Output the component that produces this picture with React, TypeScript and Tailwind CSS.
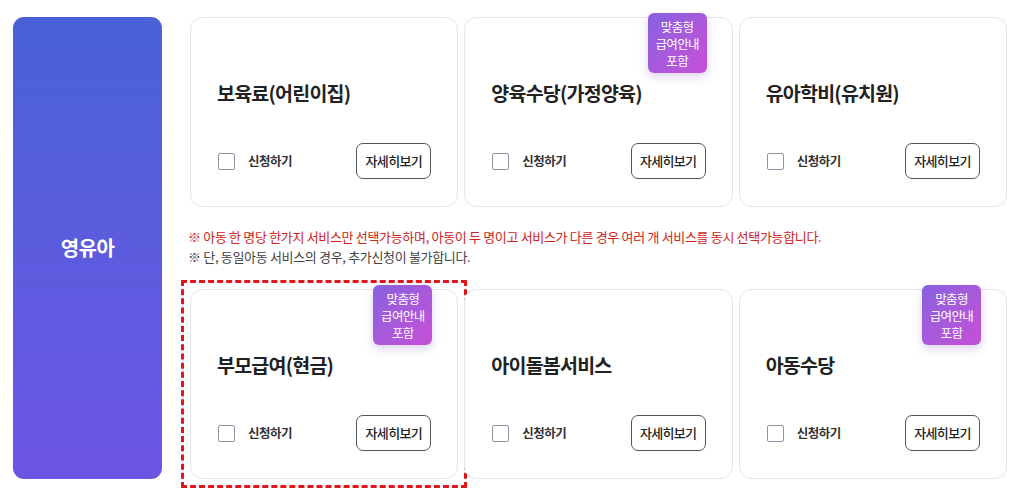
import { useState } from "react";

type Service = {
  title: string;
  custom?: boolean;
  highlight?: boolean;
};

const topRow: Service[] = [
  { title: "보육료(어린이집)" },
  { title: "양육수당(가정양육)", custom: true },
  { title: "유아학비(유치원)" },
];

const bottomRow: Service[] = [
  { title: "부모급여(현금)", custom: true, highlight: true },
  { title: "아이돌봄서비스" },
  { title: "아동수당", custom: true },
];

const font = { fontFamily: '"Noto Sans CJK KR", "Noto Sans", sans-serif' };

function CustomBadge() {
  return (
    <div className="absolute -top-[5px] right-[25px] flex h-[60px] w-[59px] flex-col items-center justify-center rounded-[6px] bg-gradient-to-br from-[#8760e0] to-[#c64ed6] text-center text-[12.5px] leading-[17px] tracking-[-0.05em] text-white shadow-[0_4px_10px_rgba(120,80,200,0.25)]">
      <span>맞춤형</span>
      <span>급여안내</span>
      <span>포함</span>
    </div>
  );
}

function ServiceCard({ service }: { service: Service }) {
  const [checked, setChecked] = useState(false);

  const card = (
    <div className="relative flex h-[190px] flex-col rounded-[12px] border border-[#e6e6e6] bg-white px-[26px] pb-[27px] pt-[61px]">
      {service.custom && <CustomBadge />}
      <h3 className="text-[19.5px] font-bold leading-[28px] tracking-[-0.04em] text-[#222]">
        {service.title}
      </h3>
      <div className="mt-auto flex items-center justify-between">
        <label className="flex cursor-pointer items-center gap-[13px]">
          <span
            onClick={() => setChecked(!checked)}
            className="ml-[1px] h-[17px] w-[17px] rounded-[2px] border-[1.5px] border-[#8d95a3] bg-white"
          />
          <span className="text-[12.5px] font-bold tracking-[-0.04em] text-[#333]">신청하기</span>
        </label>
        <button className="h-[36px] w-[75px] rounded-[7px] border border-[#555] bg-white text-[13px] font-medium tracking-[-0.05em] text-[#222]">
          자세히보기
        </button>
      </div>
    </div>
  );

  if (service.highlight) {
    return (
      <div className="-m-[9px] border-[3px] border-dashed border-[#e0161b] p-[6px]">{card}</div>
    );
  }
  return card;
}

export default function App() {
  return (
    <div className="flex min-h-[492px] gap-[28px] bg-white pb-[14px] pl-[13px] pr-[17px] pt-[17px]" style={font}>
      <div className="flex w-[149px] shrink-0 items-center justify-center rounded-[11px] bg-gradient-to-b from-[#4861d9] to-[#6c55e3]">
        <span className="text-[20px] font-bold tracking-[-0.03em] text-white">영유아</span>
      </div>

      <div className="flex flex-1 flex-col">
        <div className="grid grid-cols-3 gap-[6px]">
          {topRow.map((s) => (
            <ServiceCard key={s.title} service={s} />
          ))}
        </div>

        <div className="flex h-[82px] flex-col justify-center pb-[2px] text-[13px] leading-[20px] tracking-[-0.025em]">
          <p className="-ml-[2px] text-[#d0241c]">
            ※ 아동 한 명당 한가지 서비스만 선택가능하며, 아동이 두 명이고 서비스가 다른 경우 여러 개 서비스를 동시 선택가능합니다.
          </p>
          <p className="-ml-[2px] text-[#444]">※ 단, 동일아동 서비스의 경우, 추가신청이 불가합니다.</p>
        </div>

        <div className="grid grid-cols-3 gap-[6px]">
          {bottomRow.map((s) => (
            <ServiceCard key={s.title} service={s} />
          ))}
        </div>
      </div>
    </div>
  );
}
